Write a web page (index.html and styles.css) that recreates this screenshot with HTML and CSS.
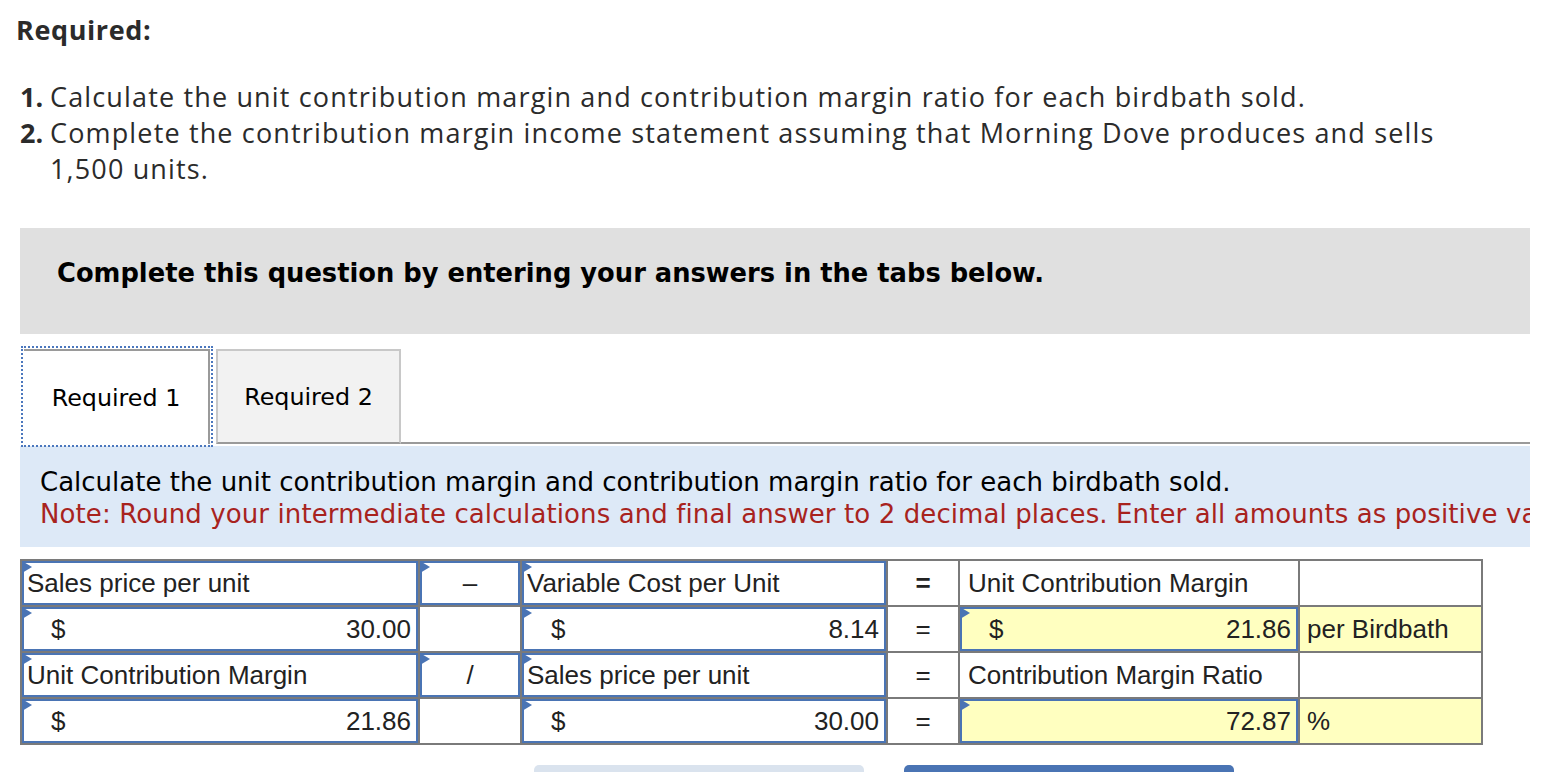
FILE: index.html
```html
<!DOCTYPE html>
<html>
<head>
<meta charset="utf-8">
<link rel="stylesheet" href="styles.css">
</head>
<body>
<div class="page">
  <h1 class="req-title">Required:</h1>
  <ol class="req-list">
    <li><b>1.</b><span>Calculate the unit contribution margin and contribution margin ratio for each birdbath sold.</span></li>
    <li><b>2.</b><span>Complete the contribution margin income statement assuming that Morning Dove produces and sells 1,500 units.</span></li>
  </ol>

  <div class="banner">Complete this question by entering your answers in the tabs below.</div>

  <div class="tabs">
    <div class="tab active">Required 1</div>
    <div class="tab">Required 2</div>
    <div class="tab-fill"></div>
  </div>

  <div class="panel">
    <p class="panel-main">Calculate the unit contribution margin and contribution margin ratio for each birdbath sold.</p>
    <p class="panel-note">Note: Round your intermediate calculations and final answer to 2 decimal places. Enter all amounts as positive values.</p>
  </div>

  <table class="calc">
    <colgroup>
      <col class="c1"><col class="c2"><col class="c3"><col class="c4"><col class="c5"><col class="c6">
    </colgroup>
    <tr>
      <td><div class="inp label"><i class="flag"></i>Sales price per unit</div></td>
      <td><div class="inp op"><i class="flag"></i>–</div></td>
      <td><div class="inp label"><i class="flag"></i>Variable Cost per Unit</div></td>
      <td class="eq"><b>=</b></td>
      <td class="plain">Unit Contribution Margin</td>
      <td></td>
    </tr>
    <tr>
      <td><div class="inp money"><i class="flag"></i><span>$</span><span>30.00</span></div></td>
      <td></td>
      <td><div class="inp money"><i class="flag"></i><span>$</span><span>8.14</span></div></td>
      <td class="eq">=</td>
      <td class="yellow"><div class="inp money"><i class="flag"></i><span>$</span><span>21.86</span></div></td>
      <td class="yellow unit">per Birdbath</td>
    </tr>
    <tr>
      <td><div class="inp label"><i class="flag"></i>Unit Contribution Margin</div></td>
      <td><div class="inp op"><i class="flag"></i>/</div></td>
      <td><div class="inp label"><i class="flag"></i>Sales price per unit</div></td>
      <td class="eq">=</td>
      <td class="plain">Contribution Margin Ratio</td>
      <td></td>
    </tr>
    <tr>
      <td><div class="inp money"><i class="flag"></i><span>$</span><span>21.86</span></div></td>
      <td></td>
      <td><div class="inp money"><i class="flag"></i><span>$</span><span>30.00</span></div></td>
      <td class="eq">=</td>
      <td class="yellow"><div class="inp money"><i class="flag"></i><span></span><span>72.87</span></div></td>
      <td class="yellow unit">%</td>
    </tr>
  </table>

  <div class="buttons">
    <div class="btn btn-prev"></div>
    <div class="btn btn-next"></div>
  </div>
</div>
</body>
</html>
```

FILE: styles.css
```css
html, body {
  margin: 0;
  padding: 0;
  background: #fff;
  overflow: hidden;
}

.page {
  width: 1562px;
  height: 772px;
  overflow: hidden;
}

.req-title {
  margin: 0;
  padding: 14px 0 0 16px;
  font-family: "Open Sans", Lato, sans-serif;
  font-weight: 700;
  font-size: 27px;
  letter-spacing: 0.6px;
  line-height: 32px;
  color: #2b2b2b;
}

.req-list {
  list-style: none;
  margin: 0;
  padding: 33px 0 0 20px;
  font-family: "Open Sans", Lato, sans-serif;
  font-size: 27px;
  letter-spacing: 1.15px;
  line-height: 36px;
  color: #2b2b2b;
}

.req-list li {
  display: flex;
}

.req-list li b {
  flex: 0 0 30px;
  font-weight: 700;
  letter-spacing: 0;
}

.req-list li span {
  max-width: 1450px;
}

.banner {
  margin: 41px 0 0 20px;
  width: 1510px;
  height: 106px;
  box-sizing: border-box;
  background: #e0e0e0;
  padding: 0 0 16px 37px;
  display: flex;
  align-items: center;
  font-family: Verdana, "DejaVu Sans", sans-serif;
  font-weight: 700;
  font-size: 25.75px;
  color: #000;
}

.tabs {
  margin: 15px 0 0 20px;
  width: 1510px;
  height: 95px;
  display: flex;
  align-items: stretch;
}

.tab {
  box-sizing: border-box;
  display: flex;
  align-items: center;
  justify-content: center;
  font-family: Verdana, "DejaVu Sans", sans-serif;
  font-size: 23.8px;
  color: #000;
}

.tab.active {
  width: 186px;
  margin-left: 4px;
  background: #fff;
  border-top: 2px solid #9a9a9a;
  border-right: 2px solid #9a9a9a;
  outline: 2px dotted #4b77bd;
  outline-offset: 1px;
  height: 95px;
}

.tab:not(.active) {
  width: 185px;
  margin-left: 6px;
  background: #f2f2f2;
  border: 2px solid #c8c8c8;
  border-bottom: 2px solid #9a9a9a;
  height: 95px;
}

.tab-fill {
  flex: 1;
  border-bottom: 2px solid #9a9a9a;
}

.panel {
  margin: 2px 0 0 20px;
  width: 1510px;
  height: 101px;
  box-sizing: border-box;
  background: #dde9f7;
  padding: 20px 0 0 20px;
  overflow: hidden;
  font-family: Verdana, "DejaVu Sans", sans-serif;
  font-size: 26px;
  line-height: 32px;
}

.panel p {
  margin: 0;
  white-space: nowrap;
}

.panel-main { color: #000; }
.panel-note { color: #a8231e; letter-spacing: 0.1px; }

.calc {
  margin: 12px 0 0 20px;
  border-collapse: collapse;
  table-layout: fixed;
  width: 1461px;
  font-family: Arial, "Liberation Sans", sans-serif;
  font-size: 26px;
  color: #222;
}

.c1 { width: 398px; }
.c2 { width: 102px; }
.c3 { width: 366px; }
.c4 { width: 72px; }
.c5 { width: 340px; }
.c6 { width: 183px; }

.calc td {
  border: 2px solid #7a7a7a;
  height: 44px;
  padding: 0;
  box-sizing: content-box;
  vertical-align: middle;
}

.calc td.eq {
  text-align: center;
}

.calc td.eq b {
  font-weight: 700;
}

.calc td.plain {
  padding-left: 8px;
}

.calc td.yellow {
  background: #ffffc0;
}

.calc td.unit {
  padding-left: 7px;
}

.inp {
  position: relative;
  box-sizing: border-box;
  height: 44px;
  border: 2px solid #4a74b4;
  background: #fff;
  display: flex;
  align-items: center;
}

.yellow .inp {
  background: #ffffc0;
}

.inp.label {
  padding-left: 3px;
  white-space: nowrap;
}

.inp.op {
  justify-content: center;
}

.inp.money {
  justify-content: space-between;
  padding: 0 5px 0 27px;
}

.flag {
  position: absolute;
  top: -2px;
  left: -2px;
  width: 0;
  height: 0;
  border-top: 6px solid transparent;
  border-bottom: 6px solid transparent;
  border-left: 10px solid #4a74b4;
}

.buttons {
  margin: 20px 0 0 534px;
  display: flex;
  gap: 40px;
}

.btn {
  width: 330px;
  height: 40px;
  border-radius: 5px;
}

.btn-prev { background: #dae3ee; }
.btn-next { background: #4a74b4; }
```
